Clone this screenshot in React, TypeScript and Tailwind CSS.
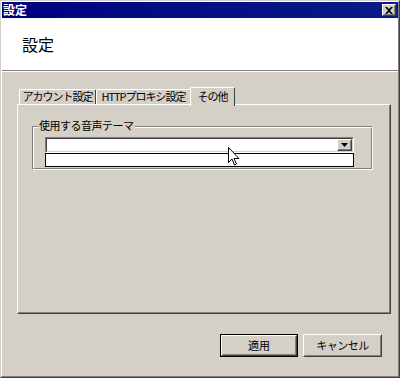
import React from 'react';

// --- Classic 3D helpers ---
const Raised: React.FC<{ children?: React.ReactNode; className?: string }> = ({ children, className = '' }) => (
  <div className={`border border-t-white border-l-white border-r-[#404040] border-b-[#404040] ${className}`}>
    <div className="w-full h-full border border-t-[#d4d0c8] border-l-[#d4d0c8] border-r-[#808080] border-b-[#808080] flex items-center justify-center">
      {children}
    </div>
  </div>
);

const Tab: React.FC<{ label: string; width: string; active?: boolean }> = ({ label, width, active }) => (
  <div
    className={`${width} ${active ? 'h-[19px] -mb-[2px] relative z-10 -ml-[1px]' : 'h-[15px]'} bg-[#d4d0c8] border-t border-l border-r border-t-white border-l-white border-r-[#404040] rounded-tl-[2px] rounded-tr-[2px] flex items-start justify-center`}
  >
    <span className={`text-[11px] leading-none text-black whitespace-nowrap tracking-[-1px] ${active ? 'pt-[3px]' : 'pt-[1px]'}`}>{label}</span>
  </div>
);

const Cursor = () => (
  <svg width="12" height="19" viewBox="0 0 12 19" className="absolute left-[227px] top-[146px] z-20">
    <path d="M0.5 0.5 L0.5 15.5 L4 12 L6.5 18 L8.5 17 L6 11.5 L11 11.5 Z" fill="white" stroke="black" strokeWidth="1" />
  </svg>
);

export default function App() {
  return (
    <div className="relative w-[400px] h-[378px] bg-[#d4d0c8] border border-t-[#d4d0c8] border-l-[#d4d0c8] border-r-[#404040] border-b-[#404040] font-['Noto_Sans_CJK_JP',sans-serif] select-none">
      <div className="h-full border border-t-white border-l-white border-r-[#808080] border-b-[#808080] flex flex-col">
        {/* Title bar */}
        <div className="h-[16px] bg-gradient-to-r from-[#000080] to-[#0a1a88] flex items-center justify-between pl-[1px] pr-[2px]">
          <span className="text-white text-[12px] font-bold leading-none">設定</span>
          <Raised className="w-[14px] h-[12px] bg-[#d4d0c8]">
            <svg width="8" height="7" viewBox="0 0 8 7">
              <path d="M0 0 L2 0 L4 2 L6 0 L8 0 L5 3.5 L8 7 L6 7 L4 5 L2 7 L0 7 L3 3.5 Z" fill="black" />
            </svg>
          </Raised>
        </div>

        {/* Header */}
        <div className="h-[53px] bg-white border-b border-b-[#808080] flex items-center pl-[20px]">
          <span className="text-[16px] leading-none text-black">設定</span>
        </div>
        <div className="h-[1px] bg-white" />

        {/* Body */}
        <div className="flex-1 pt-[15px] pl-[15px] pr-[16px] flex flex-col">
          {/* Tabs */}
          <div className="flex items-end h-[17px] pl-[2px]">
            <Tab label="アカウント設定" width="w-[77px]" />
            <Tab label="HTTPプロキシ設定" width="w-[95px]" />
            <Tab label="その他" width="w-[45px]" active />
          </div>

          {/* Panel */}
          <div className="w-[374px] h-[210px] border border-t-white border-l-white border-r-[#404040] border-b-[#404040]">
            <div className="w-full h-full border-r border-b border-r-[#808080] border-b-[#808080] pt-[21px] pl-[14px]">
              {/* Group box */}
              <div className="relative w-[341px] h-[44px] border border-t-[#808080] border-l-[#808080] border-r-white border-b-white">
                <div className="w-full h-full border border-t-white border-l-white border-r-[#808080] border-b-[#808080] pt-[9px] pl-[11px]">
                  <span className="absolute left-[5px] -top-[7px] bg-[#d4d0c8] px-[1px] text-[11px] leading-none text-black tracking-[-0.5px]">
                    使用する音声テーマ
                  </span>
                  {/* Combo box */}
                  <div className="w-[309px] h-[16px] border border-t-[#808080] border-l-[#808080] border-r-white border-b-white">
                    <div className="w-full h-full bg-white border border-t-[#404040] border-l-[#404040] border-r-[#d4d0c8] border-b-[#d4d0c8] flex justify-end">
                      <Raised className="w-[15px] h-full bg-[#d4d0c8]">
                        <svg width="7" height="4" viewBox="0 0 7 4">
                          <path d="M0 0 L7 0 L3.5 4 Z" fill="black" />
                        </svg>
                      </Raised>
                    </div>
                  </div>
                  {/* Dropdown list */}
                  <div className="w-[309px] h-[14px] bg-white border border-black" />
                </div>
              </div>
            </div>
          </div>

          {/* Buttons */}
          <div className="flex justify-end gap-[5px] mt-[20px]">
            <div className="w-[78px] h-[23px] border border-black">
              <Raised className="w-full h-full bg-[#d4d0c8]">
                <span className="text-[11px] leading-none text-black">適用</span>
              </Raised>
            </div>
            <Raised className="w-[79px] h-[23px] bg-[#d4d0c8]">
              <span className="text-[11px] leading-none text-black tracking-[-0.5px]">キャンセル</span>
            </Raised>
          </div>
        </div>
      </div>
      <Cursor />
    </div>
  );
}
